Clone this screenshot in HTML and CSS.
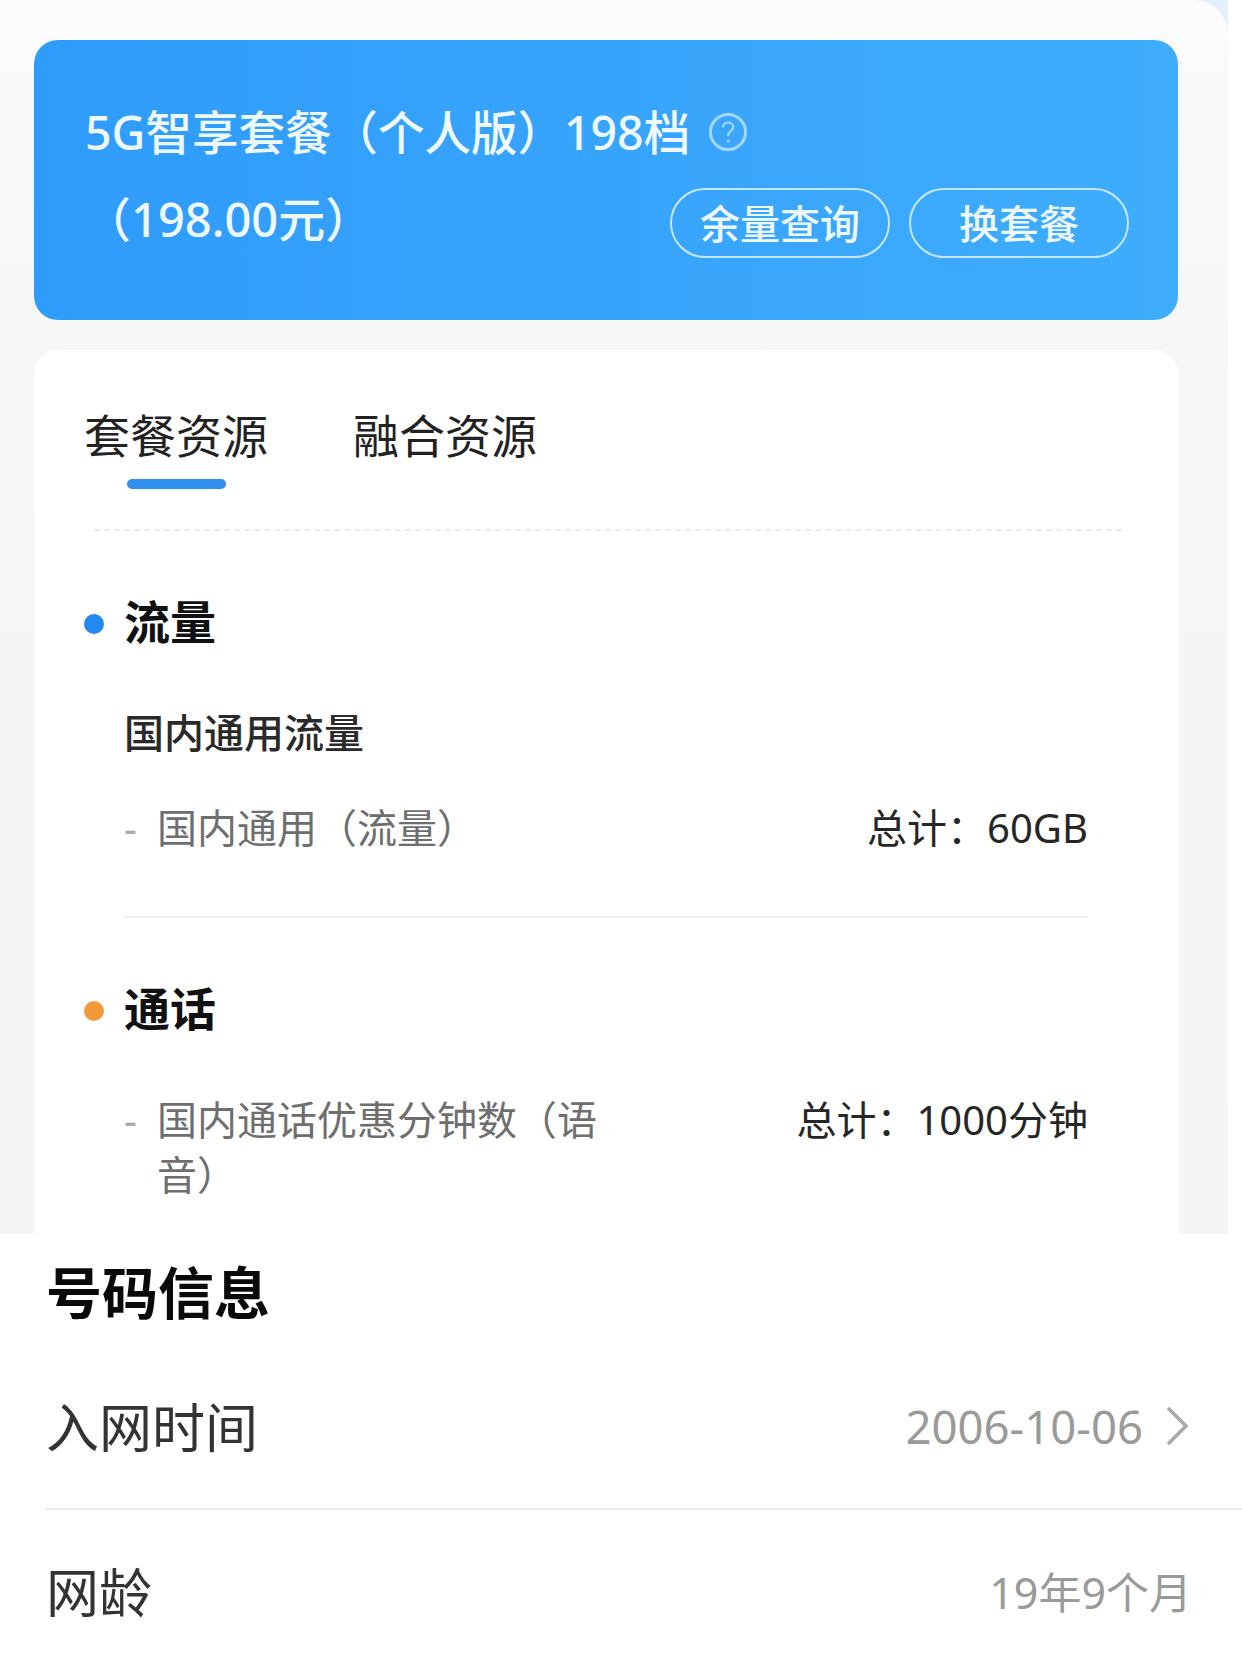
FILE: index.html
```html
<!DOCTYPE html>
<html lang="zh-CN">
<head>
<meta charset="utf-8">
<title>套餐</title>
<link rel="stylesheet" href="styles.css">
</head>
<body>
<div class="screen">
  <div class="panel-back">
  <div class="panel">
    <section class="hero">
      <div class="hero-title">
        <span>5G智享套餐（个人版）198档</span>
        <svg class="help" viewBox="0 0 40 40" width="40" height="40" aria-hidden="true">
          <circle cx="20" cy="20" r="17.500" fill="none" stroke="#a6d8fc" stroke-width="3"/>
          <path d="M15 15.500c0-3 2.300-5 5.200-5 2.900 0 5 1.900 5 4.500 0 2-1 3.200-2.700 4.400-1.600 1.100-2.300 2-2.300 3.800v1" fill="none" stroke="#a6d8fc" stroke-width="2.200"/>
          <circle cx="20.200" cy="29" r="1.500" fill="#a6d8fc"/>
        </svg>
      </div>
      <div class="hero-row">
        <span class="hero-price">（198.00元）</span>
        <div class="hero-actions">
          <span class="pill">余量查询</span>
          <span class="pill">换套餐</span>
        </div>
      </div>
    </section>
    <section class="card">
      <div class="tabs">
        <div class="tab tab-active">套餐资源</div>
        <div class="tab">融合资源</div>
      </div>
      <div class="dash"></div>
      <div class="group-head"><i class="dot dot-blue"></i><h3>流量</h3></div>
      <div class="sub-head">国内通用流量</div>
      <div class="item item-flow">
        <span class="tick">-</span>
        <span class="item-name">国内通用（流量）</span>
        <span class="item-total">总计：60GB</span>
      </div>
      <div class="rule"></div>
      <div class="group-head group-call"><i class="dot dot-orange"></i><h3>通话</h3></div>
      <div class="item item-call">
        <span class="tick">-</span>
        <span class="item-name">国内通话优惠分钟数（语音）</span>
        <span class="item-total">总计：1000分钟</span>
      </div>
    </section>
  </div>
  </div>
  <section class="info">
    <h2>号码信息</h2>
    <div class="info-row info-row-first">
      <span class="info-label">入网时间</span>
      <span class="info-value">2006-10-06
        <svg class="chev" viewBox="0 0 24 40" width="24" height="40" aria-hidden="true"><path d="M3 2l18 18L3 38" fill="none" stroke="#a8a8a8" stroke-width="3.500"/></svg>
      </span>
    </div>
    <div class="info-row">
      <span class="info-label">网龄</span>
      <span class="info-value info-value-plain">19年9个月</span>
    </div>
  </section>
</div>
</body>
</html>
```
FILE: styles.css
```css
* { box-sizing: border-box; }
html, body { margin: 0; padding: 0; background: #fff; }
body {
  width: 1242px;
  height: 1656px;
  overflow: hidden;
  font-family: "Noto Sans", "Noto Sans CJK SC", sans-serif;
}
.screen { display: flex; flex-direction: column; height: 1656px; }
.panel-back {
  height: 1234px;
  width: 1228px;
  flex: none;
  background: #e4f1fd;
}
.panel {
  height: 1234px;
  padding: 40px 50px 0 34px;
  background: linear-gradient(180deg, #fbfbfc 0%, #f6f6f7 30%, #f5f5f6 100%);
  border-top-right-radius: 34px;
  overflow: hidden;
}
.hero {
  height: 280px;
  border-radius: 24px;
  background: linear-gradient(90deg, #2f9bfb 0%, #3fadfc 100%);
  color: #eef8ff;
  padding: 57px 49px 0 51px;
}
.hero-title {
  display: flex;
  align-items: center;
  gap: 18px;
  font-size: 46.500px;
  line-height: 70px;
  font-weight: 500;
  white-space: nowrap;
}
.help { flex: none; }
.hero-row {
  display: flex;
  justify-content: space-between;
  align-items: center;
  margin-top: 13px;
}
.hero-price { font-size: 47px; line-height: 70px; font-weight: 500; margin-left: -1px; }
.hero-actions { display: flex; gap: 19px; margin-top: 8px; }
.pill {
  height: 70px;
  border: 2px solid #c5e6fd;
  border-radius: 35px;
  width: 220px;
  display: flex;
  align-items: center;
  justify-content: center;
  font-size: 40px;
  font-weight: 500;
  padding-bottom: 2px;
}
.card {
  margin-top: 30px;
  background: #fff;
  border-radius: 24px 24px 0 0;
  height: 900px;
  padding: 52px 50px 0 50px;
}
.tabs { display: flex; gap: 85px; }
.tab {
  position: relative;
  font-size: 46px;
  line-height: 66px;
  color: #222;
  white-space: nowrap;
}
.tab-active::after {
  content: "";
  position: absolute;
  left: 43px;
  bottom: -21px;
  width: 99px;
  height: 10px;
  border-radius: 5px;
  background: #2f8fee;
}
.dash {
  margin: 61px 0 0 10px;
  width: 1028px;
  border-top: 2px dashed #ebebeb;
}
.group-head { display: flex; align-items: center; margin-top: 57px; }
.group-call { margin-top: 57px; }
.dot { width: 20px; height: 20px; border-radius: 50%; flex: none; margin: 5px 20px 0 0; }
.dot-blue { background: #2189ee; }
.dot-orange { background: #f29a3a; }
.group-head h3 { margin: 0; font-size: 46px; line-height: 66px; font-weight: 700; color: #111; }
.sub-head { margin: 50px 0 0 40px; font-size: 40px; line-height: 58px; font-weight: 500; color: #2a2a2a; }
.item {
  display: grid;
  grid-template-columns: 33px 440px 1fr;
  margin-left: 40px;
  width: 964px;
  font-size: 40px;
  line-height: 55px;
}
.item-flow { margin-top: 38px; }
.item-call { margin-top: 51px; }
.tick { color: #aaa; }
.item-name { color: #6e6e6e; }
.item-total { color: #262626; text-align: right; white-space: nowrap; }
.item-flow .item-name { white-space: nowrap; }
.rule { margin: 61px 0 0 40px; width: 964px; border-top: 2px solid #f0f0f0; }
.info { flex: 1; background: #fff; padding: 18px 0 0 46px; }
.info h2 { margin: 0; font-size: 56px; line-height: 80px; font-weight: 700; color: #0a0a0a; }
.info-row {
  display: flex;
  justify-content: space-between;
  align-items: center;
  height: 160px;
  padding-right: 52px;
}
.info-row-first { margin-top: 9px; height: 169px; padding-top: 2px; border-bottom: 2px solid #ececec; margin-left: -1px; padding-left: 1px; }
.info-label { font-size: 53px; color: #333; }
.info-value { display: flex; align-items: center; gap: 22px; font-size: 45.500px; color: #9a9a9a; }
.info-value-plain { font-size: 43px; margin-right: -2px; }
.chev { flex: none; margin-right: 1px; }
```
